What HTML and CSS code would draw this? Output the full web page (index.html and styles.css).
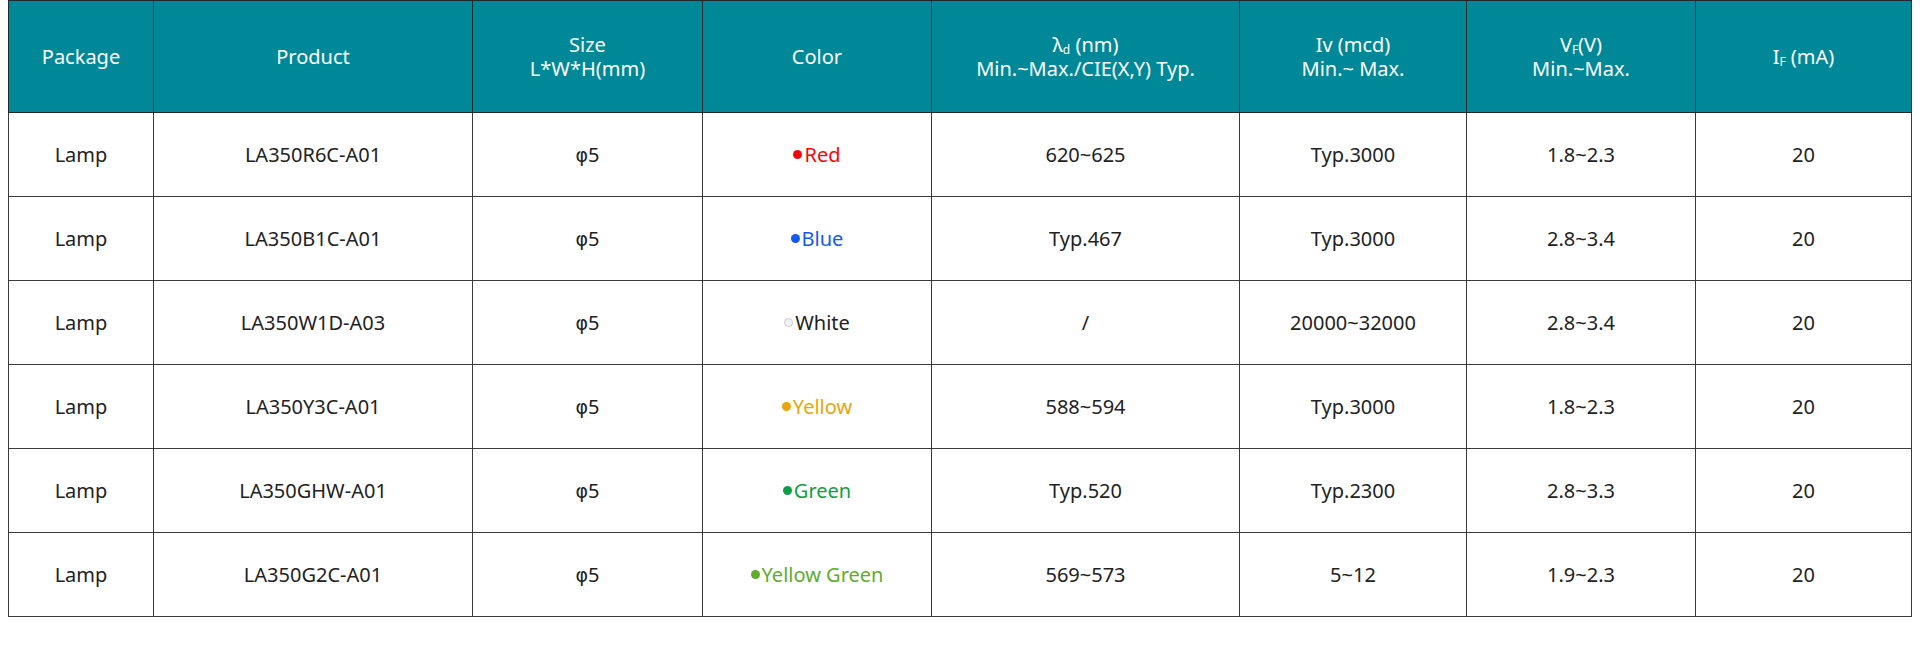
FILE: index.html
```html
<!DOCTYPE html>
<html>
<head>
<meta charset="utf-8">
<link rel="stylesheet" href="styles.css">
</head>
<body>
<table class="spec">
  <colgroup>
    <col class="c1"><col class="c2"><col class="c3"><col class="c4"><col class="c5"><col class="c6"><col class="c7"><col class="c8">
  </colgroup>
  <thead>
    <tr>
      <th>Package</th>
      <th>Product</th>
      <th>Size<br>L*W*H(mm)</th>
      <th>Color</th>
      <th>λ<sub>d</sub> (nm)<br>Min.~Max./CIE(X,Y) Typ.</th>
      <th>Iv (mcd)<br>Min.~ Max.</th>
      <th>V<sub>F</sub>(V)<br>Min.~Max.</th>
      <th>I<sub>F</sub> (mA)</th>
    </tr>
  </thead>
  <tbody>
    <tr><td>Lamp</td><td>LA350R6C-A01</td><td><span class="phi">φ</span>5</td><td class="red"><span class="dot"></span>Red</td><td>620~625</td><td>Typ.3000</td><td>1.8~2.3</td><td>20</td></tr>
    <tr><td>Lamp</td><td>LA350B1C-A01</td><td><span class="phi">φ</span>5</td><td class="blue"><span class="dot"></span>Blue</td><td>Typ.467</td><td>Typ.3000</td><td>2.8~3.4</td><td>20</td></tr>
    <tr><td>Lamp</td><td>LA350W1D-A03</td><td><span class="phi">φ</span>5</td><td class="white"><span class="dot"></span>White</td><td>/</td><td>20000~32000</td><td>2.8~3.4</td><td>20</td></tr>
    <tr><td>Lamp</td><td>LA350Y3C-A01</td><td><span class="phi">φ</span>5</td><td class="yellow"><span class="dot"></span>Yellow</td><td>588~594</td><td>Typ.3000</td><td>1.8~2.3</td><td>20</td></tr>
    <tr><td>Lamp</td><td>LA350GHW-A01</td><td><span class="phi">φ</span>5</td><td class="green"><span class="dot"></span>Green</td><td>Typ.520</td><td>Typ.2300</td><td>2.8~3.3</td><td>20</td></tr>
    <tr><td>Lamp</td><td>LA350G2C-A01</td><td><span class="phi">φ</span>5</td><td class="ygreen"><span class="dot"></span>Yellow Green</td><td>569~573</td><td>5~12</td><td>1.9~2.3</td><td>20</td></tr>
  </tbody>
</table>
</body>
</html>
```
FILE: styles.css
```css
html, body {
  margin: 0;
  background: #ffffff;
}
body {
  padding: 0 8px;
  font-family: "Noto Sans", "Open Sans", sans-serif;
  color: #222222;
}
.spec {
  width: 100%;
  border-collapse: collapse;
  table-layout: fixed;
  font-size: 20px;
}
.c1 { width: 145px; }
.c2 { width: 319px; }
.c3 { width: 230px; }
.c4 { width: 229px; }
.c5 { width: 308px; }
.c6 { width: 227px; }
.c7 { width: 229px; }
.c8 { width: auto; }
.spec th, .spec td {
  border: 1px solid #3a3a3a;
  text-align: center;
  vertical-align: middle;
  padding: 0;
}
.spec th {
  background: #008898;
  color: #ffffff;
  font-weight: normal;
  height: 111px;
  line-height: 24px;
  border-color: #1e2a2c;
}
.spec td {
  height: 83px;
}
.spec sub {
  font-size: 12px;
  vertical-align: -2px;
  line-height: 0;
}
.phi {
  font-family: "DejaVu Sans", sans-serif;
  font-size: 19px;
}
.dot {
  display: inline-block;
  width: 9px;
  height: 9px;
  border-radius: 50%;
  background: currentColor;
  vertical-align: 3px;
  margin-right: 2px;
}
.red { color: #f00a0a; }
.blue { color: #1559f2; }
.white { color: #222222; }
.white .dot { background: #f3f3f3; border: 1px solid #c6cad2; width: 7px; height: 7px; }
.yellow { color: #e8a50c; }
.green { color: #0d9f45; }
.ygreen { color: #5fac2d; }
```
